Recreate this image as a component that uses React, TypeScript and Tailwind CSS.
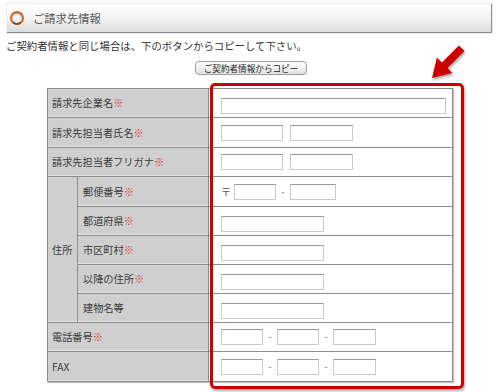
import React from 'react';

const FONT = { fontFamily: '"Noto Sans CJK JP", "Noto Sans", "Liberation Sans", sans-serif' };

const Req = () => <span className="text-[#e8383d]">※</span>;

const Field = ({ w }: { w: number }) => (
  <span
    className="inline-block h-[16px] bg-white border border-[#c9c9c9] border-t-[#989898] align-middle"
    style={{ width: w }}
  />
);

const Dash = () => <span className="inline-block w-[14px] text-center text-[9px] text-[#666] align-middle">-</span>;

const labelCell = 'bg-[#cfcfcf] border border-[#8d8d8d] text-[#3a3a3a] text-[10.2px] pl-[4px] text-left font-normal shadow-[inset_0_-1px_0_#e2e2e2]';
const inputCell = 'bg-white border border-[#8d8d8d] pl-[12px]';

export default function App() {
  return (
    <div className="relative w-[500px] h-[392px] bg-white overflow-hidden" style={FONT}>
      {/* Section heading bar */}
      <div className="pt-[3px] pl-[6px]">
        <div className="w-[485px] h-[29px] flex items-center gap-[9px] pl-[3px] bg-gradient-to-b from-white via-[#f4f4f4] to-[#dcdcdc] border-t border-l border-[#ececec] shadow-[1px_1px_1px_rgba(0,0,0,0.45)]">
          <span className="w-[14px] h-[14px] rounded-full border-[2.5px] border-[#c96a22] border-b-[#8f4714] shadow-[inset_0_1px_1px_rgba(120,50,10,0.5)]" />
          <span className="text-[11.3px] text-[#555]">ご請求先情報</span>
        </div>
      </div>

      <p className="mt-[6px] pl-[6px] text-[10.4px] leading-[16px] text-[#333]">
        ご契約者情報と同じ場合は、下のボタンからコピーして下さい。
      </p>

      <div className="mt-[7px] pl-[195px]">
        <button className="h-[14px] w-[112px] flex items-center justify-center rounded-[4px] border border-[#9a9a9a] bg-gradient-to-b from-white to-[#e2e2e2] text-[8.6px] text-[#222] leading-none">
          ご契約者情報からコピー
        </button>
      </div>

      <table className="ml-[47px] mt-[13px] w-[405px] border-collapse table-fixed shadow-[1px_1px_1px_rgba(0,0,0,0.25)]">
        <colgroup>
          <col className="w-[30px]" />
          <col className="w-[131px]" />
          <col className="w-[244px]" />
        </colgroup>
        <tbody>
          <tr className="h-[29px]">
            <th colSpan={2} className={labelCell}>請求先企業名<Req /></th>
            <td className={inputCell}><Field w={225} /></td>
          </tr>
          <tr className="h-[30px]">
            <th colSpan={2} className={labelCell}>請求先担当者氏名<Req /></th>
            <td className={inputCell}>
              <span className="flex gap-[7px]"><Field w={62} /><Field w={63} /></span>
            </td>
          </tr>
          <tr className="h-[29px]">
            <th colSpan={2} className={labelCell}>請求先担当者フリガナ<Req /></th>
            <td className={inputCell}>
              <span className="flex gap-[7px]"><Field w={62} /><Field w={63} /></span>
            </td>
          </tr>
          <tr className="h-[30px]">
            <th rowSpan={5} className={labelCell}>住所</th>
            <th className={labelCell + ' pl-[5px]'}>郵便番号<Req /></th>
            <td className={inputCell}>
              <span className="flex items-center">
                <span className="w-[13px] text-[10px] text-[#555]">〒</span>
                <Field w={42} />
                <Dash />
                <Field w={46} />
              </span>
            </td>
          </tr>
          <tr className="h-[29px]">
            <th className={labelCell + ' pl-[5px]'}>都道府県<Req /></th>
            <td className={inputCell}><Field w={103} /></td>
          </tr>
          <tr className="h-[29px]">
            <th className={labelCell + ' pl-[5px]'}>市区町村<Req /></th>
            <td className={inputCell}><Field w={103} /></td>
          </tr>
          <tr className="h-[29px]">
            <th className={labelCell + ' pl-[5px]'}>以降の住所<Req /></th>
            <td className={inputCell}><Field w={103} /></td>
          </tr>
          <tr className="h-[29px]">
            <th className={labelCell + ' pl-[5px]'}>建物名等</th>
            <td className={inputCell}><Field w={103} /></td>
          </tr>
          <tr className="h-[29px]">
            <th colSpan={2} className={labelCell}>電話番号<Req /></th>
            <td className={inputCell}>
              <span className="flex items-center">
                <Field w={42} /><Dash /><Field w={42} /><Dash /><Field w={43} />
              </span>
            </td>
          </tr>
          <tr className="h-[30px]">
            <th colSpan={2} className={labelCell}>FAX</th>
            <td className={inputCell}>
              <span className="flex items-center">
                <Field w={42} /><Dash /><Field w={42} /><Dash /><Field w={43} />
              </span>
            </td>
          </tr>
        </tbody>
      </table>

      {/* Red highlight frame over the input column */}
      <div className="absolute left-[210px] top-[83px] w-[254px] h-[306px] rounded-[5px] border-[3px] border-[#cc0000] shadow-[1px_2px_3px_rgba(0,0,0,0.35)] pointer-events-none" />

      {/* Pointer arrow */}
      <svg className="absolute left-0 top-0 pointer-events-none" width="500" height="392">
        <defs>
          <filter id="ds" x="-20%" y="-20%" width="160%" height="160%">
            <feDropShadow dx="1" dy="2" stdDeviation="1.2" floodColor="#000" floodOpacity="0.35" />
          </filter>
        </defs>
        <polygon
          points="432,78 452.5,73.1 447.5,68.1 464.5,51.1 458.9,45.5 441.9,62.5 436.9,57.5"
          fill="#cc0000"
          filter="url(#ds)"
        />
      </svg>
    </div>
  );
}
